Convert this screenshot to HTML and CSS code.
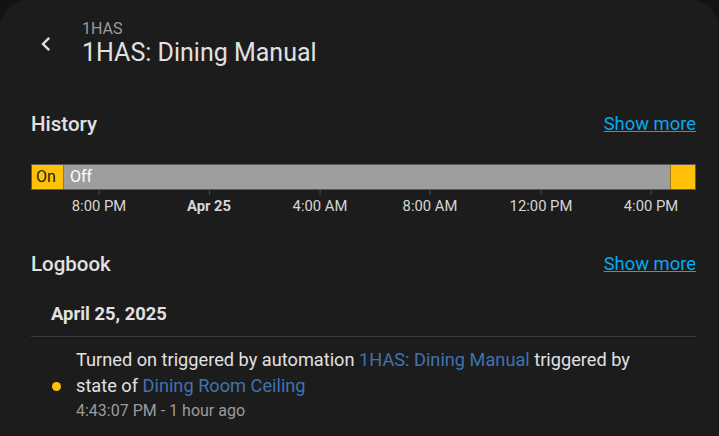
FILE: index.html
```html
<!DOCTYPE html>
<html lang="en">
<head>
  <meta charset="UTF-8" />
  <title>1HAS: Dining Manual</title>
  <link rel="stylesheet" href="styles.css">
</head>
<body>
  <div class="dialog">
    <!-- Header -->
    <div class="dialog-header">
      <button class="back-btn" aria-label="Back">
        <svg viewBox="0 0 24 24" width="28" height="28"><path d="M15.41,16.58L10.83,12L15.41,7.41L14,6L8,12L14,18L15.41,16.58Z" fill="#e1e1e1"/></svg>
      </button>
      <div class="titles">
        <div class="subtitle">1HAS</div>
        <div class="title">1HAS: Dining Manual</div>
      </div>
    </div>

    <div class="dialog-content">
      <!-- History -->
      <div class="section-head history-head">
        <span class="section-title">History</span>
        <a class="show-more" href="#">Show more</a>
      </div>
      <div class="timeline">
        <div class="bar">
          <div class="seg on" style="width: 4.81%">On</div>
          <div class="seg off" style="width: 91.43%">Off</div>
          <div class="seg on" style="width: 3.76%"></div>
        </div>
        <div class="axis">
          <span class="tick" style="left: 10.23%">8:00 PM</span>
          <span class="tick bold" style="left: 26.77%">Apr 25</span>
          <span class="tick" style="left: 43.46%">4:00 AM</span>
          <span class="tick" style="left: 60%">8:00 AM</span>
          <span class="tick" style="left: 76.69%">12:00 PM</span>
          <span class="tick" style="left: 93.23%">4:00 PM</span>
        </div>
      </div>

      <!-- Logbook -->
      <div class="section-head logbook-head">
        <span class="section-title">Logbook</span>
        <a class="show-more" href="#">Show more</a>
      </div>
      <div class="log-date">April 25, 2025</div>
      <div class="log-entry">
        <span class="dot"></span>
        <div class="log-body">
          <div class="log-msg">Turned on triggered by automation <a href="#">1HAS: Dining Manual</a> triggered by state of <a href="#">Dining Room Ceiling</a></div>
          <div class="log-time">4:43:07 PM - 1 hour ago</div>
        </div>
      </div>
    </div>
  </div>
</body>
</html>
```

FILE: styles.css
```css
html, body {
  margin: 0;
  padding: 0;
  height: 100%;
}
body {
  background: #131313;
  font-family: Roboto, 'Noto Sans', sans-serif;
  color: #e1e1e1;
  overflow: hidden;
}
.dialog {
  background: #1c1c1c;
  border-radius: 28px 28px 0 0;
  height: 100%;
  box-sizing: border-box;
}
.dialog-header {
  display: flex;
  align-items: center;
  padding: 20px 24px 0 32px;
}
.back-btn {
  background: none;
  border: none;
  padding: 0;
  width: 28px;
  height: 28px;
  margin-right: 22px;
  cursor: pointer;
}
.back-btn svg {
  display: block;
}
.titles {
  display: flex;
  flex-direction: column;
}
.subtitle {
  font-size: 16px;
  line-height: 18px;
  color: #9b9b9b;
}
.title {
  font-size: 25px;
  line-height: 30px;
  color: #e1e1e1;
}
.dialog-content {
  padding: 0 23px 0 31px;
}
.section-head {
  display: flex;
  justify-content: space-between;
  align-items: center;
}
.history-head {
  margin-top: 42px;
}
.logbook-head {
  margin-top: 30px;
}
.section-title {
  font-size: 20.5px;
  font-weight: 500;
  line-height: 28px;
}
.show-more {
  color: #03a9f4;
  font-size: 18.4px;
  line-height: 28px;
  text-decoration: underline;
}
.timeline {
  margin-top: 26px;
}
.bar {
  display: flex;
  height: 26px;
  border: 1px solid #5a5a5a;
  box-sizing: border-box;
}
.seg {
  box-sizing: border-box;
  font-size: 16px;
  line-height: 24px;
  padding-left: 4px;
  overflow: hidden;
  white-space: nowrap;
}
.seg.on {
  background: #ffc107;
  color: #1c1c1c;
  border-right: 1px solid #9a7a18;
}
.seg.on:last-child {
  border-right: none;
  border-left: 1px solid #9a7a18;
}
.seg.off {
  background: #9e9e9e;
  color: #ffffff;
  padding-left: 6px;
}
.axis {
  position: relative;
  height: 30px;
}
.tick {
  position: absolute;
  top: 7px;
  transform: translateX(-50%);
  font-size: 14.8px;
  line-height: 18px;
  color: #d6d6d6;
  white-space: nowrap;
}
.tick::before {
  content: "";
  position: absolute;
  left: 50%;
  top: -7px;
  width: 1px;
  height: 5px;
  background: #4a4a4a;
}
.tick.bold {
  font-weight: 700;
}
.log-date {
  font-size: 18.4px;
  font-weight: 700;
  line-height: 22px;
  padding: 25px 0 11px 20px;
  border-bottom: 1px solid #3a3a3a;
}
.log-entry {
  display: flex;
  align-items: center;
  padding: 10px 0 0 21px;
}
.dot {
  width: 9px;
  height: 9px;
  border-radius: 50%;
  background: #ffc107;
  margin-right: 15px;
  margin-top: 2px;
  flex-shrink: 0;
}
.log-msg {
  font-size: 18.2px;
  line-height: 26px;
  max-width: 580px;
}
.log-msg a {
  color: #3f73ad;
  text-decoration: none;
}
.log-time {
  font-size: 16px;
  line-height: 24px;
  color: #9b9b9b;
}
```
